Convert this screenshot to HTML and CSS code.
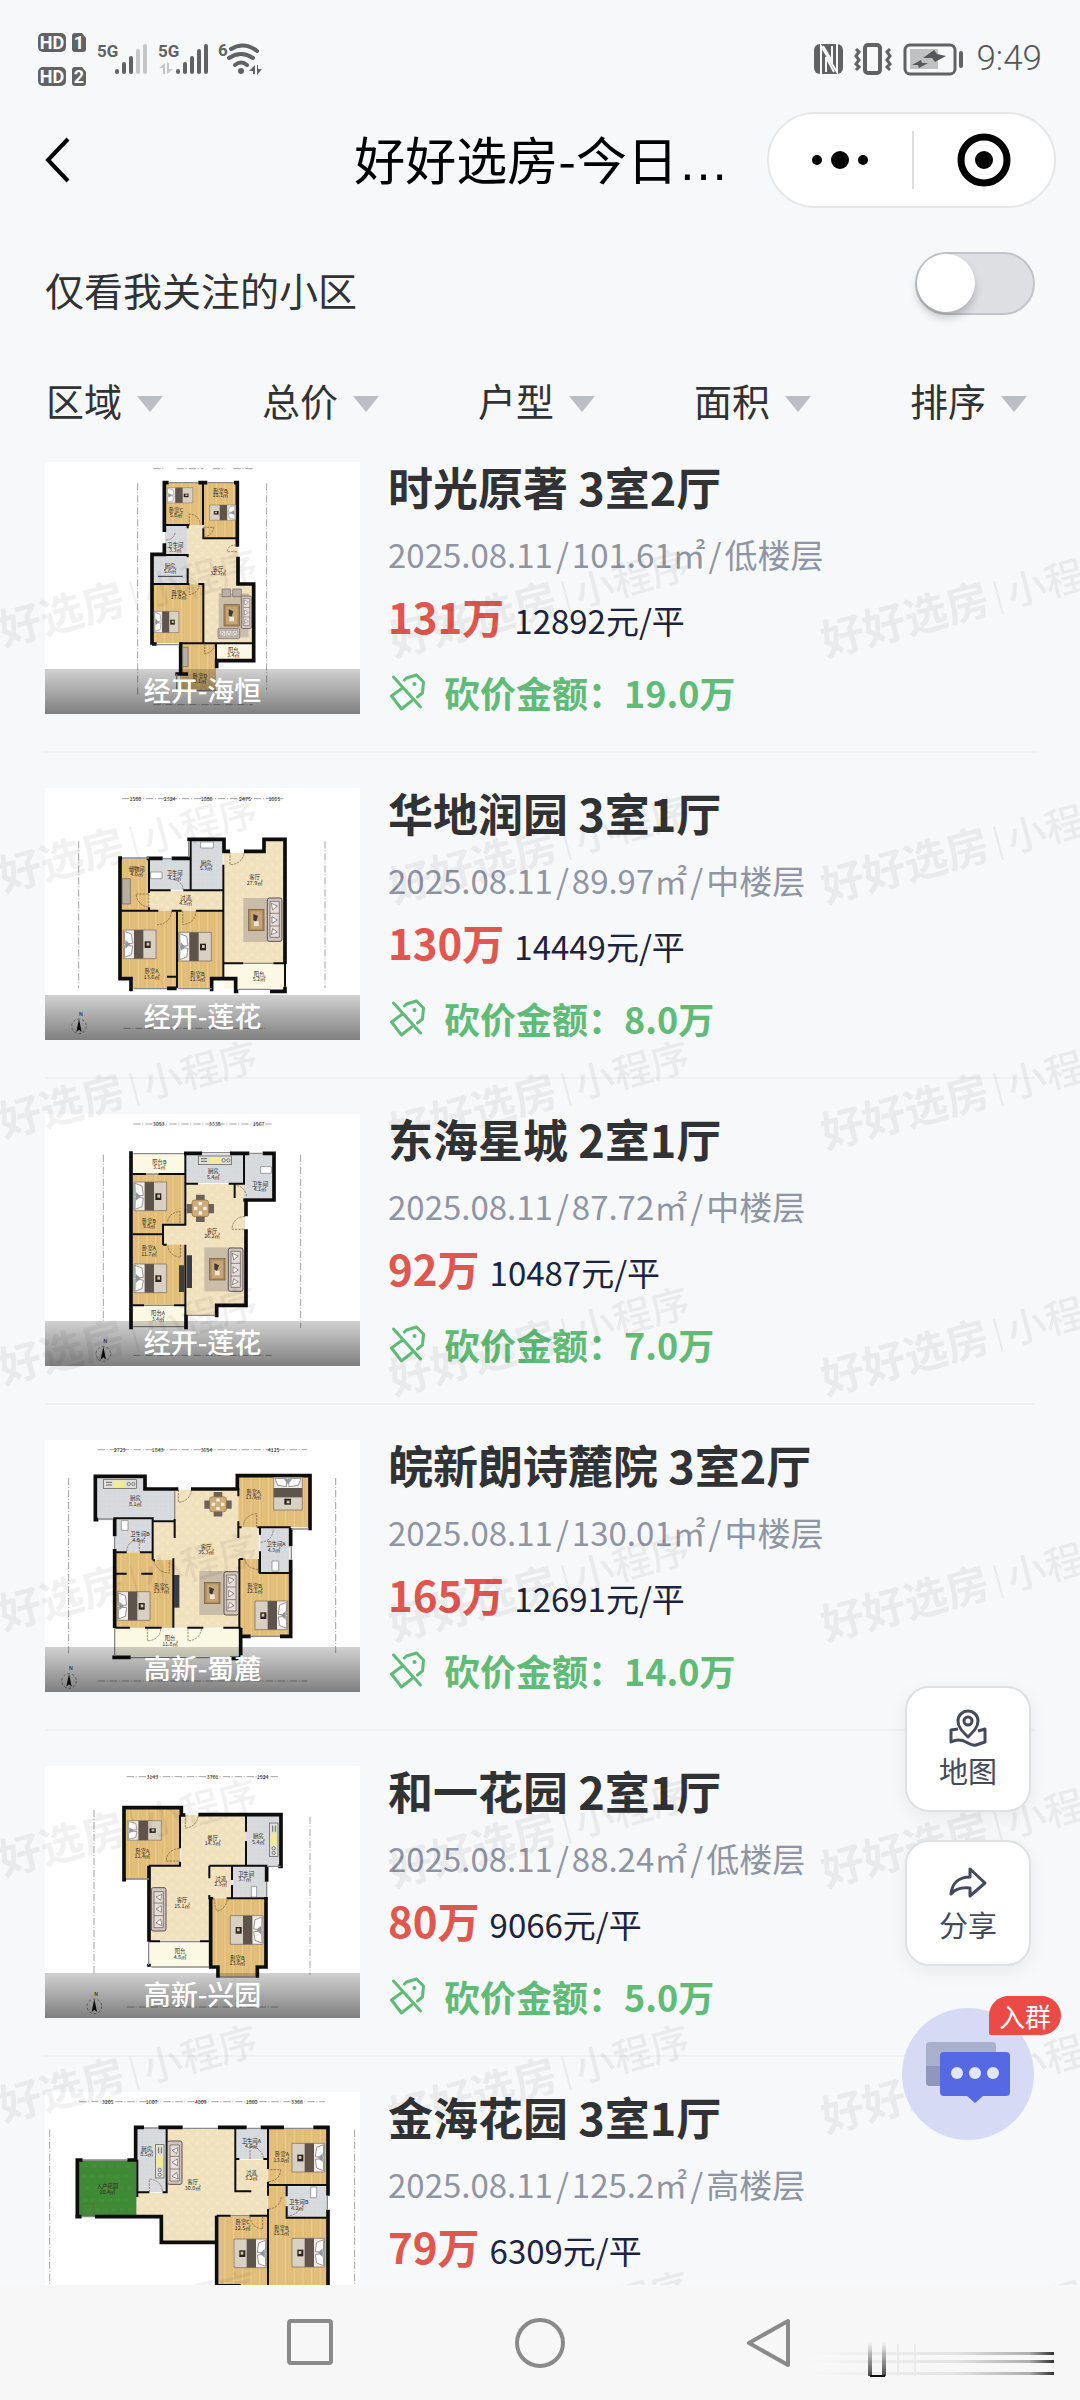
FILE: index.html
```html
<!DOCTYPE html>
<html lang="zh-CN">
<head>
    <meta charset="UTF-8">
    <meta name="viewport" content="width=device-width, initial-scale=1.0">
    <title>好好选房-今日砍价</title>
    <link rel="stylesheet" href="styles.css">
</head>
<body>

    <!-- Shared furniture and floor fills -->
    <svg class="sprite" width="0" height="0" aria-hidden="true">
        <defs>
            <pattern id="p-wood" width="26" height="60" patternUnits="userSpaceOnUse">
                <rect width="26" height="60" fill="#e3bf7c"/>
                <path d="M6 0V60M19 0V60" stroke="#dbb672" stroke-width="2"/>
                <path d="M13 0V60" stroke="#ebcb8e" stroke-width="3"/>
            </pattern>
            <pattern id="p-tile" width="14" height="14" patternUnits="userSpaceOnUse">
                <rect width="14" height="14" fill="#d8dbde"/>
                <path d="M0 0H14M0 0V14" stroke="#c8ccd0" stroke-width="1"/>
            </pattern>
            <pattern id="p-stone" width="30" height="30" patternUnits="userSpaceOnUse">
                <rect width="30" height="30" fill="#f1e2bf"/>
                <path d="M4 6h6v5h-6zM19 17h7v6h-7z" fill="#f5e9cb"/>
                <path d="M17 3h5v4h-5zM6 21h5v4h-5z" fill="#eddcb6"/>
            </pattern>
            <g id="bed">
                <rect width="98" height="86" fill="#d9d0c4"/>
                <rect width="32" height="86" fill="#efebe6"/>
                <path d="M3 4L24 12L28 40L4 42ZM4 46L28 48L24 74L3 82Z" fill="#fff" stroke="#6f655c" stroke-width="2"/>
                <path d="M6 30L20 43L6 56Z" fill="#8d97a0"/>
                <rect x="32" width="28" height="86" fill="#5f544b"/>
                <path d="M0 0H98V86H0Z" fill="none" stroke="#6f655c" stroke-width="2"/>
                <rect x="64" y="34" width="18" height="20" fill="#2b241f"/>
                <rect x="70" y="38" width="8" height="9" fill="#d8c3a8"/>
            </g>
            <g id="lounge">
                <rect width="90" height="132" fill="#c9bda8"/>
                <rect x="16" y="34" width="46" height="64" fill="#b08c5c" stroke="#6e5433" stroke-width="2"/>
                <rect x="22" y="40" width="34" height="52" fill="#c5a679"/>
                <path d="M30 48L44 54L38 72L30 66Z" fill="#3f3a33"/>
                <rect x="32" y="70" width="14" height="14" fill="#eee6d8"/>
            </g>
            <g id="sofa">
                <rect width="44" height="130" rx="6" fill="#cfc4be" stroke="#5d5350" stroke-width="3"/>
                <path d="M8 10H36V118H8ZM8 46H36M8 84H36" fill="#e6ddd8" stroke="#5d5350" stroke-width="2"/>
                <path d="M12 16L30 24L16 36ZM14 56L30 66L14 76ZM12 110L30 102L16 92Z" fill="#fff" stroke="#5d5350" stroke-width="2"/>
            </g>
            <g id="dining">
                <path d="M28 0H54V82H28ZM0 28H82V56H0Z" fill="#6d6259"/>
                <rect x="16" y="16" width="50" height="50" rx="8" fill="#cfac78" stroke="#8d6c3e" stroke-width="2"/>
                <path d="M36 22H46V32H36ZM36 50H46V60H36ZM22 36H32V46H22ZM50 36H60V46H50Z" fill="#f7f2e8"/>
            </g>
            <g id="stove">
                <rect width="100" height="26" fill="#dfe0dc" stroke="#55524c" stroke-width="2"/>
                <rect x="32" y="3" width="34" height="20" fill="#f0eb9a"/>
                <path d="M8 8H26M8 16H26" stroke="#6a665e" stroke-width="3"/>
                <circle cx="76" cy="13" r="5" fill="none" stroke="#55524c" stroke-width="2"/>
                <circle cx="90" cy="13" r="5" fill="none" stroke="#55524c" stroke-width="2"/>
            </g>
            <g id="compass">
                <circle r="22" fill="none" stroke="#666" stroke-width="2" stroke-dasharray="8 6"/>
                <path d="M0 -22L8 17L0 10L-8 17Z" fill="#111"/>
                <text y="-32">N</text>
            </g>
            <g id="tag">
                <path d="M14 15L3 23L13 36L23 28M18 5L28 2L35 9L34 20L29 24M5 4L32 34M18 5L16 7" fill="none" stroke="currentColor" stroke-width="3" stroke-linecap="round" stroke-linejoin="round"/>
                <circle cx="26" cy="11" r="2" fill="currentColor"/>
            </g>
        </defs>
    </svg>

    <div class="status-bar">
        <svg width="228" height="58" viewBox="36 29 228 58" aria-hidden="true">
            <rect x="38" y="32" width="28" height="19" rx="5" fill="#616263"/>
            <rect x="38" y="66" width="28" height="19" rx="5" fill="#616263"/>
            <path d="M75 32H82L86 37V48Q86 51 83 51H75Q72 51 72 48V35Q72 32 75 32ZM75 66H82L86 71V82Q86 85 83 85H75Q72 85 72 82V69Q72 66 75 66Z" fill="#616263"/>
            <text class="badge-text" x="52" y="48">HD</text>
            <text class="badge-text" x="52" y="82">HD</text>
            <text class="badge-text" x="79" y="48">1</text>
            <text class="badge-text" x="79" y="82">2</text>
            <text class="net-text" x="97" y="56">5G</text>
            <text class="net-text" x="158" y="56">5G</text>
            <text class="net-text" x="218" y="55">6</text>
            <g fill="none" stroke="#616263" stroke-width="4" stroke-linecap="round">
                <path d="M117 70V71M124 63V71M131 57V71"/>
                <path d="M138 50V71M145 45V71" stroke="#c4c6c8"/>
                <path d="M178 70V71M185 63V71M192 57V71M199 50V71M206 45V71"/>
                <path d="M231 48Q244 40 257 50M229 57Q241 49 253 57M235 64Q241 59 247 64"/>
            </g>
            <circle cx="241" cy="70" r="3" fill="#616263"/>
            <path d="M159 67L165 62V73H163V67ZM167 62H169V68H173L167 73Z" fill="#c4c6c8"/>
            <path d="M249 70L255 64V73H253V70ZM257 64H258V68H262L257 74Z" fill="#616263"/>
        </svg>
        <div class="status-right">
            <svg width="150" height="34" viewBox="815 41 150 34" aria-hidden="true">
                <rect x="815" y="43" width="29" height="30" rx="6" fill="#616263"/>
                <path d="M822 73V45L838 71V43" fill="none" stroke="#f7f8fa" stroke-width="2"/>
                <path d="M827 71V56L835 71M824 45L833 60V45" fill="none" stroke="#f7f8fa" stroke-width="2"/>
                <rect x="866" y="44" width="15" height="28" rx="3" fill="none" stroke="#616263" stroke-width="4"/>
                <path d="M857 48L860 51L857 55L860 59L857 63L860 66L857 69M891 48L888 51L891 55L888 59L891 63L888 66L891 69" fill="none" stroke="#616263" stroke-width="3"/>
                <rect x="906" y="44" width="50" height="29" rx="5" fill="none" stroke="#616263" stroke-width="3"/>
                <rect x="911" y="48" width="28" height="20" fill="#bfc1c2"/>
                <path d="M913 64L922 59L923 62L929 62L920 67L919 64ZM924 57L935 49L938 53L947 55L936 61L933 57Z" fill="#55575a"/>
                <rect x="960" y="50" width="4" height="17" rx="2" fill="#616263"/>
            </svg>
            <span class="clock">9:49</span>
        </div>
    </div>

    <header class="nav">
        <button class="back" type="button" aria-label="返回">
            <svg width="28" height="48" viewBox="0 0 28 48"><path d="M24 3L4 24L24 45" fill="none" stroke="#000" stroke-width="4"/></svg>
        </button>
        <h1>好好选房-今日<span class="more">…</span></h1>
        <div class="capsule">
            <button type="button" aria-label="更多">
                <svg width="60" height="20" viewBox="0 0 60 20"><circle cx="7" cy="10" r="5"/><circle cx="30" cy="10" r="9"/><circle cx="53" cy="10" r="5"/></svg>
            </button>
            <button type="button" aria-label="关闭">
                <svg width="54" height="54" viewBox="0 0 54 54"><circle cx="27" cy="27" r="23" fill="none" stroke="#000" stroke-width="7"/><circle cx="27" cy="27" r="9"/></svg>
            </button>
        </div>
    </header>

    <div class="follow">
        <label for="follow">仅看我关注的小区</label>
        <input type="checkbox" id="follow" class="switch" role="switch">
    </div>

    <div class="filters">
        <div class="filter"><select aria-label="区域"><option>区域</option></select></div>
        <div class="filter"><select aria-label="总价"><option>总价</option></select></div>
        <div class="filter"><select aria-label="户型"><option>户型</option></select></div>
        <div class="filter"><select aria-label="面积"><option>面积</option></select></div>
        <div class="filter"><select aria-label="排序"><option>排序</option></select></div>
    </div>

    <main class="content">
        <div class="list">

            <article class="house">
                <div class="photo">
                    <svg class="plan" viewBox="45 36 945 756" aria-hidden="true">
                        <path class="dim" d="M370 56H405M440 56H520M548 56H585M610 56H668M323 100V735M710 100V720M370 764H668"/>
                        <path class="stone" d="M473 225H520V265H625V400H668V580H520V403H473Z"/>
                        <path class="wood" d="M405 98H520V225H405ZM520 98H620V265H520ZM370 403H520V580H370ZM450 580H558V722H450Z"/>
                        <path class="tile" d="M405 228H473V315H405ZM370 315H473V403H370Z"/>
                        <path class="balcony" d="M558 580H668V632H558Z"/>
                        <path class="wall" d="M403 93V246M403 280V313H366V584M398 98H416M505 98H532M612 98H622V290M624 320V402H671V632H560V655M366 582H380M448 582H452V672H436M452 672H474"/>
                        <path class="wall thin" d="M519 98V225M403 225H478M473 225V235M520 235V265H622M366 315H473V322M473 355V403M366 402H478M505 402H520V580H668M558 580V632M448 580H530"/>
                        <path class="window" d="M416 98H505M532 98H612M380 584H448M440 672V722H560"/>
                        <path class="door" d="M478 225V192Q510 195 510 225M520 232H552Q545 258 520 262M478 402V434Q505 430 508 402M620 285Q592 285 592 305H620M408 270Q430 270 436 246M524 580V612Q552 606 554 582"/>
                        <use href="#bed" transform="translate(410 113) scale(.8 .53)"/>
                        <use href="#bed" transform="translate(617 165) scale(-.8 .53)"/>
                        <use href="#bed" transform="translate(372 484) scale(.76 .74)"/>
                        <use href="#lounge" transform="translate(566 430)"/>
                        <use href="#sofa" transform="translate(634 438) scale(.7 .75)"/>
                        <use href="#sofa" transform="translate(564 566) rotate(-90) scale(.7 .5)"/>
                        <path d="M576 417H602V440H576ZM608 417H634V440H608ZM458 592H474V650H458Z" fill="#b9aea6" stroke="#6f655c" stroke-width="2"/>
                        <path d="M384 379H458" stroke="#333" stroke-width="3"/>
                        <text x="438" y="186">卧室C</text><text x="438" y="200">5.8㎡</text>
                        <text x="571" y="128">卧室B</text><text x="571" y="142">10.1㎡</text>
                        <text x="436" y="291">卫生间</text><text x="436" y="305">3.3㎡</text>
                        <text x="420" y="355">厨房</text><text x="420" y="369">5.6㎡</text>
                        <text x="564" y="362">客厅</text><text x="564" y="376">32.3㎡</text>
                        <text x="446" y="434">卧室A</text><text x="446" y="448">17.0㎡</text>
                        <text x="610" y="606">阳台</text><text x="610" y="620">3.4㎡</text>
                        <text x="510" y="684">卧室D</text><text x="510" y="698">9.1㎡</text>
                    </svg>
                    <p class="caption">经开-海恒</p>
                </div>
                <div class="info">
                    <h2>时光原著 3室2厅</h2>
                    <p class="meta"><span>2025.08.11</span><i>/</i><span>101.61㎡</span><i>/</i><span>低楼层</span></p>
                    <p class="price"><strong>131万</strong>12892元/平</p>
                    <p class="cut"><svg width="38" height="38" viewBox="0 0 37 38" aria-hidden="true"><use href="#tag"/></svg>砍价金额：19.0万</p>
                </div>
            </article>

            <article class="house">
                <div class="photo">
                    <svg class="plan" viewBox="45 20 945 756" aria-hidden="true">
                        <path class="dim" d="M276 52H760M146 180V620M885 180V620M280 741H710"/>
                        <text x="316" y="58">1580</text><text x="419" y="58">2324</text><text x="530" y="58">1886</text><text x="645" y="58">2475</text><text x="733" y="58">1005</text>
                        <path class="stone" d="M360 328H580V215H640L700 215V178H765V545H580V388H360Z"/>
                        <path class="wood" d="M275 232H357V388H275ZM275 388H440V620H308V592H275ZM444 388H580V592H545V620H444Z"/>
                        <path class="tile" d="M357 232H482V325H357ZM482 178H578V325H482Z"/>
                        <path class="balcony" d="M582 547H765V622H582Z"/>
                        <path class="wall" d="M270 225V592H303V630M265 231H276M350 231H398M425 231H480M472 174H582V210H600M642 210H702V174H765V548M765 616V630H720M411 621H440M545 630V592H617V630H625"/>
                        <path class="wall thin" d="M357 232V335M357 378V388M270 388H385M425 388H455M498 388H580V250M580 305V327H460M422 327H357M482 178V327M441 388V620M580 388V590M582 546H640M730 546H765V616M411 586H440"/>
                        <path class="window" d="M276 230H357M398 232H425M476 180V228M310 622H411M445 622H545M625 624H720M640 546H730"/>
                        <path class="door" d="M600 212V250Q638 248 642 214M425 390Q420 428 382 430M458 388V430Q495 425 498 390M318 338H357V378Q322 372 318 338M460 327Q458 300 432 295"/>
                        <use href="#bed" transform="translate(280 446)"/>
                        <use href="#bed" transform="translate(446 453)"/>
                        <use href="#lounge" transform="translate(640 350)"/>
                        <use href="#sofa" transform="translate(712 350)"/>
                        <path d="M277 292H301V368H277Z" fill="#b9aea6" stroke="#6f655c" stroke-width="2"/>
                        <path d="M362 272H396V292H362ZM512 182H550V200H512Z" fill="#fff" stroke="#777" stroke-width="2"/>
                        <text x="320" y="268">储物间</text><text x="320" y="284">4.6㎡</text>
                        <text x="434" y="280">卫生间</text><text x="434" y="296">4.2㎡</text>
                        <text x="528" y="250">厨房</text><text x="528" y="266">5.3㎡</text>
                        <text x="674" y="294">客厅</text><text x="674" y="310">27.9㎡</text>
                        <text x="467" y="356">过道</text><text x="467" y="372">4.8㎡</text>
                        <text x="365" y="576">卧室A</text><text x="365" y="592">13.6㎡</text>
                        <text x="502" y="584">卧室B</text><text x="502" y="600">11.5㎡</text>
                        <text x="687" y="584">阳台</text><text x="687" y="600">5.2㎡</text>
                        <use href="#compass" x="147" y="735"/>
                    </svg>
                    <p class="caption">经开-莲花</p>
                </div>
                <div class="info">
                    <h2>华地润园 3室1厅</h2>
                    <p class="meta"><span>2025.08.11</span><i>/</i><span>89.97㎡</span><i>/</i><span>中楼层</span></p>
                    <p class="price"><strong>130万</strong>14449元/平</p>
                    <p class="cut"><svg width="38" height="38" viewBox="0 0 37 38" aria-hidden="true"><use href="#tag"/></svg>砍价金额：8.0万</p>
                </div>
            </article>

            <article class="house">
                <div class="photo">
                    <svg class="plan" viewBox="45 38 945 756" aria-hidden="true">
                        <path class="dim" d="M310 68H725M220 160V660M812 160V680M310 762H725"/>
                        <text x="386" y="74">3053</text><text x="554" y="74">3338</text><text x="686" y="74">1567</text>
                        <path class="stone" d="M400 365H468V248H645V610H558V642H468V430H400Z"/>
                        <path class="wood" d="M308 218H464V398H308ZM308 402H464V610H308Z"/>
                        <path class="stone" d="M401 370H470V430H401Z"/>
                        <path class="tile" d="M468 158H642V245H468ZM642 158H730V290H642Z"/>
                        <path class="balcony" d="M308 158H464V216H308ZM308 612H464V676H308Z"/>
                        <path class="wall" d="M303 150V684M462 156H516M600 156H658M698 156H732V296H640M648 292V345M648 384V612H560V648M468 640V684"/>
                        <path class="wall thin" d="M308 218H348M385 218H466V370H399V430M308 399H399M399 430H410M466 430V642M308 612H342M432 612H466M466 158V247H504M596 247H642V158M614 247V290"/>
                        <path class="window" d="M310 157H462M516 154H600M658 156H698M310 676H462M474 642H556M348 218H385M342 612H432"/>
                        <path class="door" d="M450 365V330Q415 335 413 362M452 430V468Q418 464 414 434M645 345Q608 348 606 384H645M616 288V252Q645 255 650 286"/>
                        <use href="#bed" transform="translate(312 242)"/>
                        <use href="#bed" transform="translate(312 488)"/>
                        <use href="#lounge" transform="translate(523 438)"/>
                        <use href="#sofa" transform="translate(595 440)"/>
                        <use href="#dining" transform="translate(470 280)"/>
                        <use href="#stove" transform="translate(505 164)"/>
                        <path d="M470 462H486V560H470ZM447 492H462V572H447Z" fill="#3c3d42"/>
                        <path d="M692 196H724V216H692Z" fill="#fff" stroke="#777" stroke-width="2"/>
                        <text x="388" y="187">阳台B</text><text x="388" y="203">3.1㎡</text>
                        <text x="357" y="365">卧室B</text><text x="357" y="381">9.8㎡</text>
                        <text x="357" y="447">卧室A</text><text x="357" y="463">11.7㎡</text>
                        <text x="550" y="216">厨房</text><text x="550" y="232">5.4㎡</text>
                        <text x="690" y="254">卫生间</text><text x="690" y="270">4.1㎡</text>
                        <text x="546" y="395">客厅</text><text x="546" y="411">26.2㎡</text>
                        <text x="384" y="642">阳台A</text><text x="384" y="658">3.4㎡</text>
                        <use href="#compass" x="220" y="758"/>
                    </svg>
                    <p class="caption">经开-莲花</p>
                </div>
                <div class="info">
                    <h2>东海星城 2室1厅</h2>
                    <p class="meta"><span>2025.08.11</span><i>/</i><span>87.72㎡</span><i>/</i><span>中楼层</span></p>
                    <p class="price"><strong>92万</strong>10487元/平</p>
                    <p class="cut"><svg width="38" height="38" viewBox="0 0 37 38" aria-hidden="true"><use href="#tag"/></svg>砍价金额：7.0万</p>
                </div>
            </article>

            <article class="house">
                <div class="photo">
                    <svg class="plan" viewBox="45 41 945 756" aria-hidden="true">
                        <path class="dim" d="M203 70H832M116 155V685M917 155V680M203 764H832"/>
                        <text x="269" y="76">2723</text><text x="383" y="76">1843</text><text x="529" y="76">3654</text><text x="731" y="76">4125</text>
                        <path class="stone" d="M366 288H434V190H625V303H687V398H628V604H430V400H366Z"/>
                        <path class="wood" d="M625 150H836V303H625ZM628 398H690V440H778V630H628ZM256 378H366V400H430V604H256Z"/>
                        <path class="tile" d="M200 156H345V190H434V282H200ZM256 278H366V378H256ZM690 305H778V438H690Z"/>
                        <path class="balcony" d="M252 606H628V690H252Z"/>
                        <path class="wall" d="M205 280H196V150H345V188H445M483 188H622V148H840V312M254 276V330M254 368V605M247 693H302M632 604V696H600M634 630H662M750 630H782V400M782 360V305"/>
                        <path class="wall thin" d="M250 276H368V400M368 285H434V335M434 278V285M256 378H290M330 378H368M430 396V604M256 442H290M334 442H368M368 402H375M256 604H300M345 604H395M472 604H520M580 604H632M625 185V210M625 285V335M625 303H635M682 303H782M690 303V325M690 375V440H782M628 398H640M688 398V440M628 398V604"/>
                        <path class="window" d="M206 278H250M254 606V688M302 694H600M662 630H750M434 195V278M784 360V400M254 330V368M784 308H836"/>
                        <path class="door" d="M445 190V228Q480 224 484 192M680 303V262Q642 266 640 300M692 348Q728 344 730 308M372 402Q380 438 418 440V402M644 396Q650 428 688 430M352 606V644Q390 640 392 608M474 606V644Q510 640 514 608M290 376Q292 342 328 340V376"/>
                        <use href="#bed" transform="translate(262 496)"/>
                        <use href="#bed" transform="translate(773 524)  scale(-1 1)"/>
                        <use href="#bed" transform="translate(817 153) rotate(90)"/>
                        <use href="#lounge" transform="translate(508 434)"/>
                        <use href="#sofa" transform="translate(582 436)"/>
                        <use href="#dining" transform="translate(523 197) scale(1 .9)"/>
                        <use href="#stove" transform="translate(220 160)"/>
                        <path d="M432 446H448V544H432Z" fill="#3c3d42"/>
                        <path d="M274 282H294V312H274ZM726 404H746V434H726Z" fill="#fff" stroke="#777" stroke-width="2"/>
                        <text x="316" y="222">厨房</text><text x="316" y="238">8.1㎡</text>
                        <text x="330" y="330">卫生间B</text><text x="326" y="346">4.0㎡</text>
                        <text x="670" y="202">卧室A</text><text x="670" y="218">13.9㎡</text>
                        <text x="738" y="360">卫生间A</text><text x="732" y="376">4.3㎡</text>
                        <text x="528" y="368">客厅</text><text x="528" y="384">35.3㎡</text>
                        <text x="394" y="485">卧室C</text><text x="394" y="501">13.7㎡</text>
                        <text x="674" y="485">卧室B</text><text x="674" y="501">12.1㎡</text>
                        <text x="420" y="642">阳台</text><text x="420" y="658">11.8㎡</text>
                        <use href="#compass" x="117" y="764"/>
                    </svg>
                    <p class="caption">高新-蜀麓</p>
                </div>
                <div class="info">
                    <h2>皖新朗诗麓院 3室2厅</h2>
                    <p class="meta"><span>2025.08.11</span><i>/</i><span>130.01㎡</span><i>/</i><span>中楼层</span></p>
                    <p class="price"><strong>165万</strong>12691元/平</p>
                    <p class="cut"><svg width="38" height="38" viewBox="0 0 37 38" aria-hidden="true"><use href="#tag"/></svg>砍价金额：14.0万</p>
                </div>
            </article>

            <article class="house">
                <div class="photo">
                    <svg class="plan" viewBox="45 43 945 756" aria-hidden="true">
                        <path class="dim" d="M290 75H745M192 175V670M840 195V670M290 766H745"/>
                        <text x="367" y="81">3143</text><text x="548" y="81">3761</text><text x="698" y="81">1524</text>
                        <path class="stone" d="M452 190H648V340H606V438H538V568H360V342H452Z"/>
                        <path class="wood" d="M286 172H450V342H360V384H286ZM540 440H705V640H680V675H570V640H540Z"/>
                        <path class="tile" d="M648 190H750V342H648ZM608 342H708V436H608Z"/>
                        <path class="balcony" d="M360 572H538V646H360Z"/>
                        <path class="wall" d="M288 384H282V168H454V190H466M505 189H753V344H745M710 344V390M708 436V646H682V678M542 436V646H564V678M357 342V570M357 636V645"/>
                        <path class="wall thin" d="M450 190V290M450 330V342H357M648 190V240M648 268V342M538 342H712M538 342V380M606 342V385M606 400V440M538 430V440H550M590 440H712M357 569H390M510 569H540"/>
                        <path class="window" d="M288 382H357M752 344H712M710 390V436M570 676H676M364 646H538M356 572V640M390 570H510"/>
                        <path class="door" d="M466 190V230Q500 224 505 192M448 290Q410 295 409 328H450M552 440Q556 476 562 478Q588 472 592 440"/>
                        <use href="#bed" transform="translate(292 207) scale(1.04 .68)"/>
                        <use href="#bed" transform="translate(699 492) scale(-1 1)"/>
                        <use href="#sofa" transform="translate(408 538) rotate(180)"/>
                        <use href="#stove" transform="translate(744 214) rotate(90)"/>
                        <path d="M664 404H680V436H664Z" fill="#fff" stroke="#777" stroke-width="2"/>
                        <text x="337" y="304">卧室A</text><text x="337" y="320">11.4㎡</text>
                        <text x="548" y="264">餐厅</text><text x="548" y="280">14.3㎡</text>
                        <text x="685" y="260">厨房</text><text x="685" y="276">5.4㎡</text>
                        <text x="572" y="388">过道</text><text x="572" y="404">2.3㎡</text>
                        <text x="648" y="372">卫生间</text><text x="644" y="388">3.7㎡</text>
                        <text x="456" y="452">客厅</text><text x="456" y="468">15.1㎡</text>
                        <text x="450" y="605">阳台</text><text x="450" y="621">4.8㎡</text>
                        <text x="622" y="625">卧室B</text><text x="622" y="641">13.6㎡</text>
                        <use href="#compass" x="193" y="764"/>
                    </svg>
                    <p class="caption">高新-兴园</p>
                </div>
                <div class="info">
                    <h2>和一花园 2室1厅</h2>
                    <p class="meta"><span>2025.08.11</span><i>/</i><span>88.24㎡</span><i>/</i><span>低楼层</span></p>
                    <p class="price"><strong>80万</strong>9066元/平</p>
                    <p class="cut"><svg width="38" height="38" viewBox="0 0 37 38" aria-hidden="true"><use href="#tag"/></svg>砍价金额：5.0万</p>
                </div>
            </article>

            <article class="house">
                <div class="photo">
                    <svg class="plan" viewBox="45 47 945 756" aria-hidden="true">
                        <path class="dim" d="M148 76H885M59 160V640M974 160V640"/>
                        <text x="233" y="82">3205</text><text x="365" y="82">1607</text><text x="512" y="82">4009</text><text x="665" y="82">1800</text><text x="801" y="82">3366</text>
                        <path d="M145 252H320V420H145Z" fill="#3f8a34"/>
                        <path d="M160 270H300M156 300H310M165 335H305M158 372H300M170 400H310" stroke="#468f3a" stroke-width="9" stroke-dasharray="14 11"/>
                        <path class="stone" d="M412 155H618V345H714V418H560V495H398V418H320V350H412ZM618 250H714V345H618Z"/>
                        <path class="wood" d="M714 155H890V328H770V425H890V680H566V420H714Z"/>
                        <path class="tile" d="M322 155H408V348H322ZM620 155H714V248H620ZM770 330H890V422H770Z"/>
                        <path class="wall" d="M142 426V251H158M292 251H317V153H342M385 153H458M564 153H650M692 153H762M850 153H894V358M894 400V700M136 421H155M195 421H394V498H560V700M560 418V500"/>
                        <path class="wall thin" d="M322 250V362M320 348H358M398 348H410V155M616 155V345H664M616 248H628M700 248H714M714 155V278M714 316V358M714 398V700M714 326H890M770 328V360M770 390V424H890M560 418H602M658 418H714M560 626H632"/>
                        <path class="window" d="M158 251H292M342 155H385M458 156H564M650 156H692M762 156H850M892 358V400M155 421H195M602 418H658"/>
                        <path class="door" d="M358 348V308Q395 312 398 348M660 248V210Q696 214 700 246M716 316Q750 312 752 280H716M716 398Q750 394 754 362M770 420Q806 414 808 396M698 420V458Q664 454 660 422M155 420V382H192V420"/>
                        <use href="#bed" transform="translate(884 201) scale(-1 1)"/>
                        <use href="#bed" transform="translate(884 486) scale(-1 1)"/>
                        <use href="#bed" transform="translate(710 488) scale(-1 1)"/>
                        <use href="#sofa" transform="translate(456 324) rotate(180)"/>
                        <use href="#stove" transform="translate(402 205) rotate(90)"/>
                        <path d="M842 332H860V364H842Z" fill="#fff" stroke="#777" stroke-width="2"/>
                        <text x="350" y="224">厨房</text><text x="350" y="240">8.5㎡</text>
                        <text x="232" y="336">入户花园</text><text x="232" y="352">10.4㎡</text>
                        <text x="488" y="324">客厅</text><text x="488" y="340">30.0㎡</text>
                        <text x="664" y="200">卫生间A</text><text x="664" y="216">4.0㎡</text>
                        <text x="664" y="296">过道</text><text x="664" y="312">3.2㎡</text>
                        <text x="756" y="240">卧室A</text><text x="754" y="256">13.0㎡</text>
                        <text x="806" y="384">卫生间B</text><text x="802" y="400">4.2㎡</text>
                        <text x="638" y="444">卧室C</text><text x="638" y="460">12.5㎡</text>
                        <text x="754" y="460">卧室B</text><text x="754" y="476">15.1㎡</text>
                    </svg>
                </div>
                <div class="info">
                    <h2>金海花园 3室1厅</h2>
                    <p class="meta"><span>2025.08.11</span><i>/</i><span>125.2㎡</span><i>/</i><span>高楼层</span></p>
                    <p class="price"><strong>79万</strong>6309元/平</p>
                </div>
            </article>
        </div>

        <!-- Repeating watermark over the list -->
        <svg class="watermark" aria-hidden="true">
            <defs>
                <pattern id="p-mark" x="-48" y="80" width="432" height="246" patternUnits="userSpaceOnUse">
                    <g transform="translate(10 150) rotate(-15)">
                        <text class="mark-name" x="0" y="0">好好选房</text>
                        <path d="M182 -30V4" stroke="#000" stroke-width="2"/>
                        <text class="mark-type" x="192" y="0">小程序</text>
                    </g>
                </pattern>
            </defs>
            <rect width="100%" height="100%" fill="url(#p-mark)"/>
        </svg>

        <div class="floating">
            <button class="tool" type="button">
                <svg width="40" height="40" viewBox="0 0 40 40" fill="none" stroke="#454a58" stroke-width="3" stroke-linejoin="round" aria-hidden="true">
                    <path d="M20 28C14 22 10 18 10 12A10 10 0 0 1 30 12C30 18 26 22 20 28Z"/>
                    <circle cx="20" cy="12" r="4"/>
                    <path d="M10 20L3 21V33Q11 29 18 33T28 36L37 33V20L30 22"/>
                </svg>
                地图
            </button>
            <button class="tool" type="button">
                <svg width="40" height="40" viewBox="0 0 40 40" fill="none" stroke="#454a58" stroke-width="3" stroke-linejoin="round" aria-hidden="true">
                    <path d="M22 6L37 20L22 33V25C12 24 7 26 3 31C4 20 11 14 22 14Z"/>
                </svg>
                分享
            </button>
            <button class="group" type="button">
                <svg width="84" height="64" viewBox="0 0 84 64" aria-hidden="true">
                    <rect width="70" height="44" rx="4" fill="#a9b0cc"/>
                    <path d="M0 24H14V44H4Q0 44 0 40Z" fill="#8f97bd"/>
                    <path d="M18 10H80Q84 10 84 14V50Q84 54 80 54H57L49 61L41 54H18Q14 54 14 50V14Q14 10 18 10Z" fill="#5668e2"/>
                    <circle cx="31" cy="31" r="6" fill="#dfe6fd"/><circle cx="49" cy="31" r="6" fill="#dfe6fd"/><circle cx="67" cy="31" r="6" fill="#dfe6fd"/>
                </svg>
                <span class="badge">入群</span>
            </button>
        </div>
    </main>

    <nav class="system-nav">
        <button type="button" aria-label="最近任务"><svg width="54" height="54" viewBox="0 0 54 54"><rect x="6" y="5" width="42" height="42" rx="2" fill="none" stroke="#8a8a8a" stroke-width="4"/></svg></button>
        <button type="button" aria-label="主页"><svg width="54" height="54" viewBox="0 0 54 54"><circle cx="27" cy="27" r="23" fill="none" stroke="#8a8a8a" stroke-width="4"/></svg></button>
        <button type="button" aria-label="返回"><svg width="54" height="54" viewBox="0 0 54 54"><path d="M45 5V49L6 27Z" fill="none" stroke="#8a8a8a" stroke-width="4" stroke-linejoin="round"/></svg></button>
        <svg class="smear" width="250" height="50" viewBox="0 0 250 50" aria-hidden="true">
            <defs>
                <linearGradient id="g-h"><stop offset="0" stop-color="#000" stop-opacity="0"/><stop offset=".6" stop-color="#000" stop-opacity=".08"/><stop offset=".9" stop-color="#000" stop-opacity=".3"/><stop offset="1" stop-color="#000" stop-opacity=".8"/></linearGradient>
                <linearGradient id="g-v" x2="0" y2="1"><stop offset="0" stop-color="#000" stop-opacity="0"/><stop offset="1" stop-color="#000" stop-opacity=".7"/></linearGradient>
            </defs>
            <path d="M0 14H248V17H0ZM0 22H248V25H0ZM0 34H248V37H0Z" fill="url(#g-h)"/>
            <path d="M62 4H66V38H62ZM76 4H80V38H76Z" fill="url(#g-v)"/>
            <path d="M64 38H79" stroke="#111" stroke-width="2"/>
            <path d="M92 6V38M109 6V38" stroke="#ebebeb" stroke-width="2"/>
        </svg>
    </nav>

</body>
</html>
```

FILE: styles.css
```css
* {
    margin: 0;
    padding: 0;
    box-sizing: border-box;
}

body {
    font-family: "Noto Sans CJK SC", "Noto Sans", sans-serif;
    background: #f7f8fa;
    color: #303234;
    height: 100vh;
    display: flex;
    flex-direction: column;
    overflow: hidden;
}

button {
    font: inherit;
    color: inherit;
    background: none;
    border: none;
    display: flex;
    align-items: center;
    justify-content: center;
}

.sprite {
    position: absolute;
}

/* Status bar */
.status-bar {
    flex: none;
    height: 112px;
    padding: 5px 38px 0 36px;
    display: flex;
    align-items: center;
    justify-content: space-between;
}

.status-right {
    display: flex;
    align-items: center;
    gap: 12px;
}

.clock {
    font-family: Roboto, sans-serif;
    font-size: 35px;
    font-weight: 300;
    line-height: 40px;
    color: #55575a;
}

.badge-text {
    font: bold 18px Roboto, sans-serif;
    fill: #fff;
    text-anchor: middle;
}

.net-text {
    font: bold 17px Roboto, sans-serif;
    fill: #616263;
}

/* Title bar */
.nav {
    flex: none;
    height: 96px;
    padding: 0 24px 0 44px;
    display: grid;
    grid-template-columns: 28px 1fr 289px;
    align-items: center;
}

.nav h1 {
    padding-right: 38px;
    font-size: 51px;
    font-weight: 400;
    line-height: 64px;
    text-align: right;
    color: #000;
    white-space: nowrap;
}

/* low dots, the SC face centres them */
.nav .more {
    font-family: "Liberation Sans", sans-serif;
}

.back {
    width: 28px;
    height: 64px;
}

.capsule {
    height: 96px;
    display: grid;
    grid-template-columns: 1fr 1fr;
    align-items: center;
    background: #fff;
    border: 2px solid #e6e7e8;
    border-radius: 48px;
}

.capsule button {
    height: 58px;
}

.capsule button + button {
    border-left: 2px solid #dcdddf;
}

/* Followed communities switch */
.follow {
    flex: none;
    padding: 44px 45px 0;
    display: flex;
    align-items: flex-end;
    justify-content: space-between;
    font-size: 39px;
    line-height: 52px;
}

.switch {
    appearance: none;
    width: 120px;
    height: 63px;
    background: #dedfe3;
    border: 2px solid #c3c4c7;
    border-radius: 32px;
}

.switch::before {
    content: "";
    display: block;
    width: 58px;
    height: 58px;
    border-radius: 50%;
    background: #fff;
    box-shadow: 0 6px 8px rgba(0, 0, 0, 0.2);
}

.switch:checked {
    background: #5fb878;
}

.switch:checked::before {
    margin-left: auto;
}

/* Filters */
.filters {
    flex: none;
    padding: 59px 53px 1px 46px;
    display: flex;
    justify-content: space-between;
}

.filter {
    display: flex;
    align-items: center;
    gap: 14px;
}

.filter select {
    appearance: none;
    font: inherit;
    font-size: 38px;
    line-height: 52px;
    color: inherit;
    background: none;
    border: none;
}

.filter::after {
    content: "";
    margin-top: 8px;
    border: 13px solid transparent;
    border-top: 16px solid #bbbec5;
    border-bottom: 0;
}

/* House list */
.content {
    flex: 1;
    min-height: 0;
    position: relative;
}

.list {
    height: 100%;
    padding: 0 45px;
    overflow-y: auto;
    scrollbar-width: none;
}

.house {
    display: flex;
    gap: 28px;
    padding: 35px 0 37px;
    border-bottom: 2px solid #eef0f1;
}

.photo {
    position: relative;
    flex: none;
    width: 315px;
    height: 252px;
    background: #fff;
}

.plan {
    display: block;
    width: 100%;
    height: 100%;
}

.plan text {
    font-size: 16px;
    text-anchor: middle;
    fill: #2c2620;
}

.wall {
    fill: none;
    stroke: #0d0d0d;
    stroke-width: 11;
    stroke-linejoin: miter;
}

.wall.thin {
    stroke-width: 6;
}

.window {
    fill: none;
    stroke: #8a8a8a;
    stroke-width: 4;
}

.door {
    fill: none;
    stroke: #6b5a3c;
    stroke-width: 2;
    stroke-dasharray: 7 3;
}

.dim {
    fill: none;
    stroke: #777;
    stroke-width: 2;
    stroke-dasharray: 22 5 3 6;
}

.wood { fill: url(#p-wood); }
.tile { fill: url(#p-tile); }
.stone { fill: url(#p-stone); }
.balcony { fill: #fbf9e4; }

.caption {
    position: absolute;
    left: 0;
    right: 0;
    bottom: 0;
    padding-bottom: 3px;
    font-size: 27px;
    font-weight: 500;
    line-height: 42px;
    text-align: center;
    color: #fff;
    background: linear-gradient(rgba(0, 0, 0, 0.18), rgba(0, 0, 0, 0.5));
}

.info {
    flex: 1;
    min-width: 0;
    white-space: nowrap;
}

.info h2 {
    font-size: 45px;
    font-weight: 700;
    line-height: 50px;
}

.meta {
    display: flex;
    gap: 3px;
    margin-top: 22px;
    font-size: 33px;
    line-height: 40px;
    color: #8f95a3;
}

.meta i {
    font-style: normal;
}

.price {
    margin-top: 18px;
    font-size: 33px;
    line-height: 48px;
    color: #1c2340;
}

.price strong {
    margin-right: 10px;
    font-size: 42px;
    line-height: 48px;
    color: #e0574f;
}

.cut {
    display: flex;
    align-items: center;
    gap: 18px;
    margin-top: 28px;
    font-size: 36px;
    font-weight: 700;
    line-height: 40px;
    color: #60bb76;
}

/* Watermark */
.watermark {
    position: absolute;
    inset: 0;
    width: 100%;
    height: 100%;
    opacity: 0.05;
    pointer-events: none;
}

.mark-name {
    font-size: 43px;
    font-weight: 700;
}

.mark-type {
    font-size: 39px;
    font-weight: 500;
}

/* Floating tools */
.floating {
    position: absolute;
    right: 46px;
    bottom: 145px;
    display: flex;
    flex-direction: column;
    align-items: center;
    gap: 28px;
}

.tool {
    width: 126px;
    height: 126px;
    flex-direction: column;
    gap: 2px;
    font-size: 29px;
    line-height: 38px;
    color: #454a58;
    background: #fff;
    border: 2px solid #dfe0e1;
    border-radius: 24px;
    box-shadow: 0 6px 20px rgba(0, 0, 0, 0.06);
}

.group {
    position: relative;
    width: 132px;
    height: 132px;
    margin-top: 14px;
    border-radius: 50%;
    background: #d6daf5;
}

.badge {
    position: absolute;
    top: -12px;
    right: -27px;
    width: 72px;
    font-size: 26px;
    line-height: 39px;
    color: #fff;
    background: #ea4b46;
    border-radius: 20px 20px 20px 2px;
}

/* System navigation */
.system-nav {
    position: relative;
    flex: none;
    height: 115px;
    padding: 0 195px;
    display: flex;
    align-items: center;
    justify-content: space-around;
    background: #f7f7f7;
}

.smear {
    position: absolute;
    right: 24px;
    bottom: 12px;
}
```
